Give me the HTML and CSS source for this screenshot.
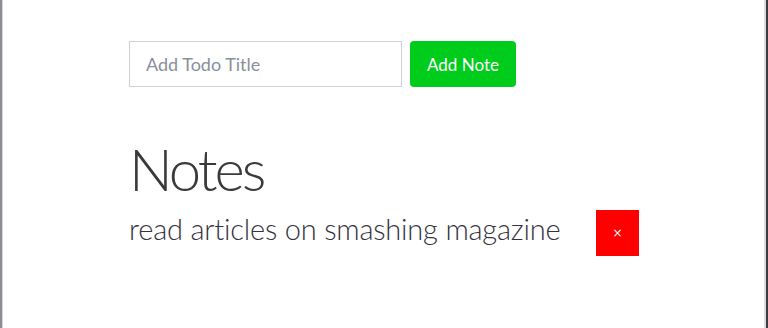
FILE: index.html
```html
<!DOCTYPE html>
<html lang="en">
<head>
<meta charset="utf-8">
<title>Notes</title>
<link rel="stylesheet" href="styles.css">
</head>
<body>
<div class="frame">
  <main class="content">
    <form class="add-form">
      <input class="title-input" type="text" placeholder="Add Todo Title">
      <button class="add-btn" type="button">Add Note</button>
    </form>
    <h1 class="heading">Notes</h1>
    <ul class="notes">
      <li class="note">
        <span class="note-text">read articles on smashing magazine</span>
        <button class="delete-btn" type="button">×</button>
      </li>
    </ul>
  </main>
</div>
</body>
</html>
```
FILE: styles.css
```css
html, body {
  margin: 0;
  padding: 0;
  background: #ffffff;
}

body {
  font-family: Lato, "Noto Sans", sans-serif;
  color: #333333;
}

.frame {
  box-sizing: border-box;
  height: 328px;
  border-left: 2px solid #8e8e92;
  border-right: 2px solid #3d3d40;
  box-shadow: inset 1px 0 0 #d4d5da, inset -2px 0 0 #dcdde3;
  overflow: hidden;
}

.content {
  padding: 41px 0 0 127px;
}

.add-form {
  display: flex;
  gap: 8px;
  margin: 0;
}

.title-input {
  box-sizing: border-box;
  width: 273px;
  height: 46px;
  border: 1px solid #cdd1d9;
  border-radius: 0;
  padding: 0 16px;
  font-family: inherit;
  font-size: 18px;
  color: #333333;
  outline: none;
}

.title-input::placeholder {
  color: #8a8f9c;
}

.add-btn {
  box-sizing: border-box;
  width: 106px;
  height: 46px;
  border: none;
  border-radius: 4px;
  background: #00cc1b;
  color: #ffffff;
  font-family: inherit;
  font-size: 17px;
  padding: 0;
}

.heading {
  margin: 50px 0 0 0;
  font-size: 58px;
  font-weight: 300;
  line-height: 64px;
  letter-spacing: -3px;
  color: #3a3a3a;
}

.notes {
  list-style: none;
  margin: 0;
  padding: 0;
}

.note {
  display: grid;
  grid-template-columns: 467px 43px;
  align-items: start;
  margin-top: 9px;
}

.note-text {
  padding-top: 1px;
  font-size: 29px;
  font-weight: 300;
  line-height: 35px;
  letter-spacing: -0.2px;
  color: #35323f;
}

.delete-btn {
  width: 43px;
  height: 46px;
  border: none;
  border-radius: 0;
  background: #ff0000;
  color: #ffffff;
  font-family: "DejaVu Sans", sans-serif;
  font-size: 12px;
  padding: 0;
}
```
